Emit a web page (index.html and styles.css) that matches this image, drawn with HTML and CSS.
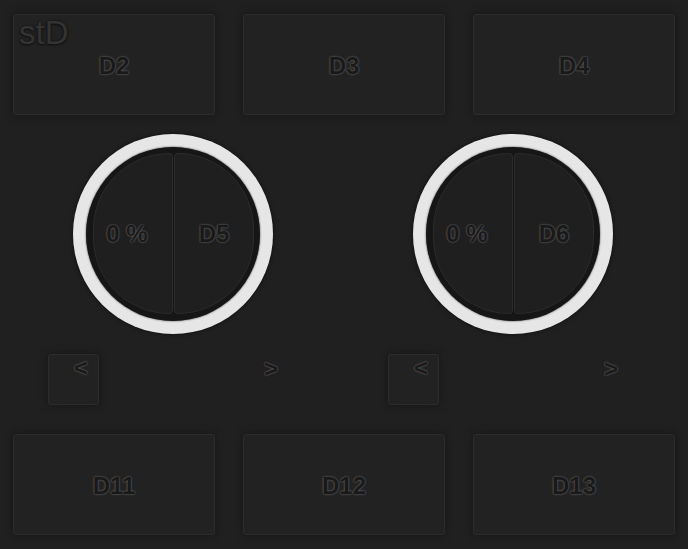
FILE: index.html
```html
<!DOCTYPE html>
<html>
    <head>
      <meta charset="utf-8">
      <title>stD</title>
      <link rel="stylesheet" href="styles.css">
    </head>

    <body>
        <div class="panel">
            <div class="logo">stD</div>
            <div class="btn_row">
                <div class="pad_btn">D2</div>
                <div class="pad_btn">D3</div>
                <div class="pad_btn">D4</div>
            </div>

            <div class="knob_row">
                <div class="knob_cell">
                    <div class="knob">
                        <div class="knob_face">
                            <div class="half half_left">0 %</div>
                            <div class="half half_right">D5</div>
                        </div>
                    </div>
                    <div class="arrow_row">
                        <div class="arrow_box">&lt;</div>
                        <div class="arrow_next">&gt;</div>
                    </div>
                </div>
                <div class="knob_cell">
                    <div class="knob">
                        <div class="knob_face">
                            <div class="half half_left">0 %</div>
                            <div class="half half_right">D6</div>
                        </div>
                    </div>
                    <div class="arrow_row">
                        <div class="arrow_box">&lt;</div>
                        <div class="arrow_next">&gt;</div>
                    </div>
                </div>
            </div>

            <div class="btn_row btn_row_bottom">
                <div class="pad_btn">D11</div>
                <div class="pad_btn">D12</div>
                <div class="pad_btn">D13</div>
            </div>
        </div>
    </body>
</html>
```

FILE: styles.css
```css
html, body{
    margin: 0;
    padding: 0;
    background-color: #202020;
}
body{
    font-family: "Liberation Sans", Arial, sans-serif;
}
.panel{
    position: relative;
    width: 688px;
    height: 549px;
    padding: 14px 13px 0;
    box-sizing: border-box;
}
.logo{
    position: absolute;
    top: 16px;
    left: 19px;
    z-index: 2;
    font-size: 33px;
    line-height: 33px;
    color: #333;
    text-shadow: 0 0 2px #111, 0 1px 2px #111;
}
.btn_row{
    display: grid;
    grid-template-columns: 202px 202px 202px;
    column-gap: 28px;
}
.btn_row_bottom{
    margin-top: 29px;
}
.pad_btn{
    height: 101px;
    box-sizing: border-box;
    padding-top: 3px;
    display: flex;
    align-items: center;
    justify-content: center;
    background-color: #222;
    border: 1px solid #2c2c2c;
    border-radius: 3px;
    box-shadow: 0 0 9px rgba(0,0,0,.35);
    font-size: 24px;
    font-weight: bold;
    color: #191919;
    text-shadow: 0 0 2px #5c5c5c, 0 0 2px #5c5c5c;
}
.knob_row{
    display: flex;
    margin: 19px 0 0 -10px;
}
.knob_cell{
    flex-shrink: 0;
    width: 340px;
}
.knob{
    width: 200px;
    height: 200px;
    margin-left: 70px;
    padding: 13px;
    box-sizing: border-box;
    border-radius: 50%;
    background: radial-gradient(circle, #e6e6e6 80%, #d8d8d8 97%, #c4c4c4 100%);
    box-shadow: 0 0 4px rgba(0,0,0,.6);
}
.knob_face{
    width: 174px;
    height: 174px;
    padding: 6px 6px 6px 7px;
    box-sizing: border-box;
    border-radius: 50%;
    background-color: #161616;
    box-shadow: 0 0 2px rgba(0,0,0,.8);
    display: flex;
    gap: 1px;
}
.half{
    width: 80px;
    height: 161px;
    box-sizing: border-box;
    display: flex;
    align-items: center;
    justify-content: center;
    background-color: #1f1f1f;
    border: 1px solid #2b2b2b;
    font-size: 24px;
    font-weight: bold;
    color: #191919;
    text-shadow: 0 0 2px #5c5c5c, 0 0 2px #5c5c5c;
}
.half_left{
    padding-right: 12px;
    border-radius: 80px 4px 4px 80px;
}
.half_right{
    border-radius: 4px 80px 80px 4px;
}
.arrow_row{
    display: flex;
    align-items: flex-start;
    margin: 20px 0 0 45px;
    font-size: 24px;
    line-height: 24px;
    font-weight: bold;
    color: #191919;
    text-shadow: 0 0 2px #5c5c5c, 0 0 2px #5c5c5c;
}
.arrow_box{
    width: 51px;
    height: 51px;
    box-sizing: border-box;
    padding: 1px 0 0 25px;
    background-color: #222;
    border: 1px solid #2c2c2c;
    border-radius: 3px;
    box-shadow: 0 0 9px rgba(0,0,0,.35);
}
.arrow_next{
    margin: 3px 0 0 165px;
}
```
